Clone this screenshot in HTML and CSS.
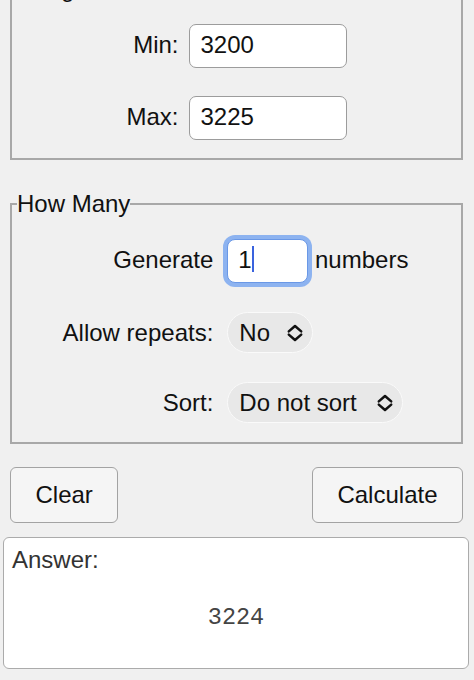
FILE: index.html
```html
<!DOCTYPE html>
<html lang="en">
<head>
<meta charset="utf-8">
<title>Random Number Generator</title>
<link rel="stylesheet" href="styles.css">
</head>
<body>
<main class="calc">
  <fieldset class="group group-range">
    <legend class="group-title">Range</legend>
    <div class="form-grid grid-range">
      <label class="field-label" for="min">Min:</label>
      <div class="field-value"><input id="min" class="text-input input-wide" type="text" value="3200"></div>
      <label class="field-label" for="max">Max:</label>
      <div class="field-value"><input id="max" class="text-input input-wide" type="text" value="3225"></div>
    </div>
  </fieldset>

  <fieldset class="group group-count">
    <legend class="group-title">How Many</legend>
    <div class="form-grid grid-count">
      <label class="field-label" for="count">Generate</label>
      <div class="field-value"><span class="focus-wrap"><input id="count" class="text-input input-narrow is-focused" type="text" value="1"><span class="caret"></span></span> numbers</div>

      <label class="field-label" for="repeats">Allow repeats:</label>
      <div class="field-value">
        <span class="select-wrap">
          <select id="repeats" class="pill-select select-repeats"><option>No</option><option>Yes</option></select>
          <svg class="chevron" viewBox="0 0 16 18" width="16" height="18" aria-hidden="true"><path d="M1.8 7.4 L8 2 L14.2 7.4 M1.8 10.6 L8 16 L14.2 10.6"/></svg>
        </span>
      </div>

      <label class="field-label" for="sort">Sort:</label>
      <div class="field-value">
        <span class="select-wrap">
          <select id="sort" class="pill-select select-sort"><option>Do not sort</option><option>Low to high</option><option>High to low</option></select>
          <svg class="chevron" viewBox="0 0 16 18" width="16" height="18" aria-hidden="true"><path d="M1.8 7.4 L8 2 L14.2 7.4 M1.8 10.6 L8 16 L14.2 10.6"/></svg>
        </span>
      </div>
    </div>
  </fieldset>

  <div class="actions">
    <button class="btn" type="button">Clear</button>
    <button class="btn" type="button">Calculate</button>
  </div>

  <section class="answer">
    <div class="answer-label">Answer:</div>
    <div class="answer-value">3224</div>
  </section>
</main>
</body>
</html>
```

FILE: styles.css
```css
html, body {
  margin: 0;
  padding: 0;
  background: #f0f0f0;
}

body {
  font-family: "Liberation Sans", Arial, sans-serif;
  font-size: 24px;
  color: #111;
  overflow: hidden;
}

.calc {
  display: flex;
  flex-direction: column;
}

.group {
  margin: 0 11px 0 10px;
  padding: 0 5px 19px;
  border: 2px solid #a8a8a8;
  min-width: 0;
}

.group-range {
  margin-top: -25px;
  padding-bottom: 18px;
}

.group-count {
  margin-top: 30px;
}

.group-title {
  padding: 0;
  font-size: 24px;
  color: #111;
}

.form-grid {
  display: grid;
  grid-template-columns: auto auto;
  justify-content: center;
  align-items: baseline;
  padding-top: 21px;
}

.grid-range {
  column-gap: 10px;
  row-gap: 28px;
}

.grid-count {
  column-gap: 14px;
  row-gap: 29px;
  padding-right: 2px;
}

.field-label {
  text-align: right;
  white-space: nowrap;
}

.field-value {
  white-space: nowrap;
}

.text-input {
  box-sizing: border-box;
  height: 44px;
  padding: 0 11px 3px;
  border: 1px solid #9c9c9c;
  border-radius: 7px;
  background: #fff;
  font-family: "Liberation Sans", Arial, sans-serif;
  font-size: 24px;
  color: #111;
  outline: none;
}

.input-wide {
  width: 158px;
}

.input-narrow {
  width: 81px;
  padding-left: 10px;
}

.is-focused {
  border-color: #6a98e6;
  border-radius: 8px;
  box-shadow: 0 0 0 4px #8db3f0;
}

.focus-wrap {
  position: relative;
  display: inline-block;
}

.caret {
  position: absolute;
  left: 25px;
  top: 7px;
  width: 2px;
  height: 26px;
  background: #3a63de;
}

.select-wrap {
  position: relative;
  display: inline-block;
}

.pill-select {
  appearance: none;
  -webkit-appearance: none;
  box-sizing: border-box;
  height: 41px;
  padding: 0 0 0 11px;
  border: 1px solid #fafafa;
  border-radius: 21px;
  background: #e8e8e8;
  font-family: "Liberation Sans", Arial, sans-serif;
  font-size: 24px;
  color: #111;
  outline: none;
}

.select-repeats {
  width: 86px;
}

.select-sort {
  width: 176px;
}

.chevron {
  position: absolute;
  right: 10px;
  top: 50%;
  margin-top: -9px;
  fill: none;
  stroke: #111;
  stroke-width: 2.5;
  stroke-linecap: round;
  stroke-linejoin: round;
  pointer-events: none;
}

.actions {
  display: flex;
  justify-content: space-between;
  margin: 23px 11px 0 10px;
}

.btn {
  box-sizing: border-box;
  height: 56px;
  padding: 0 24.5px;
  border: 1px solid #a3a3a3;
  border-radius: 6px;
  background: #f5f5f5;
  font-family: "Liberation Sans", Arial, sans-serif;
  font-size: 24px;
  color: #111;
}

.answer {
  box-sizing: border-box;
  height: 132px;
  margin: 14px 5px 0 3px;
  padding: 8px 8px 0;
  border: 1px solid #ababab;
  border-radius: 6px;
  background: #fff;
}

.answer-label {
  color: #333;
}

.answer-value {
  margin-top: 30px;
  text-align: center;
  font-family: "Liberation Mono", "Courier New", monospace;
  font-size: 23.5px;
  color: #444;
}
```
